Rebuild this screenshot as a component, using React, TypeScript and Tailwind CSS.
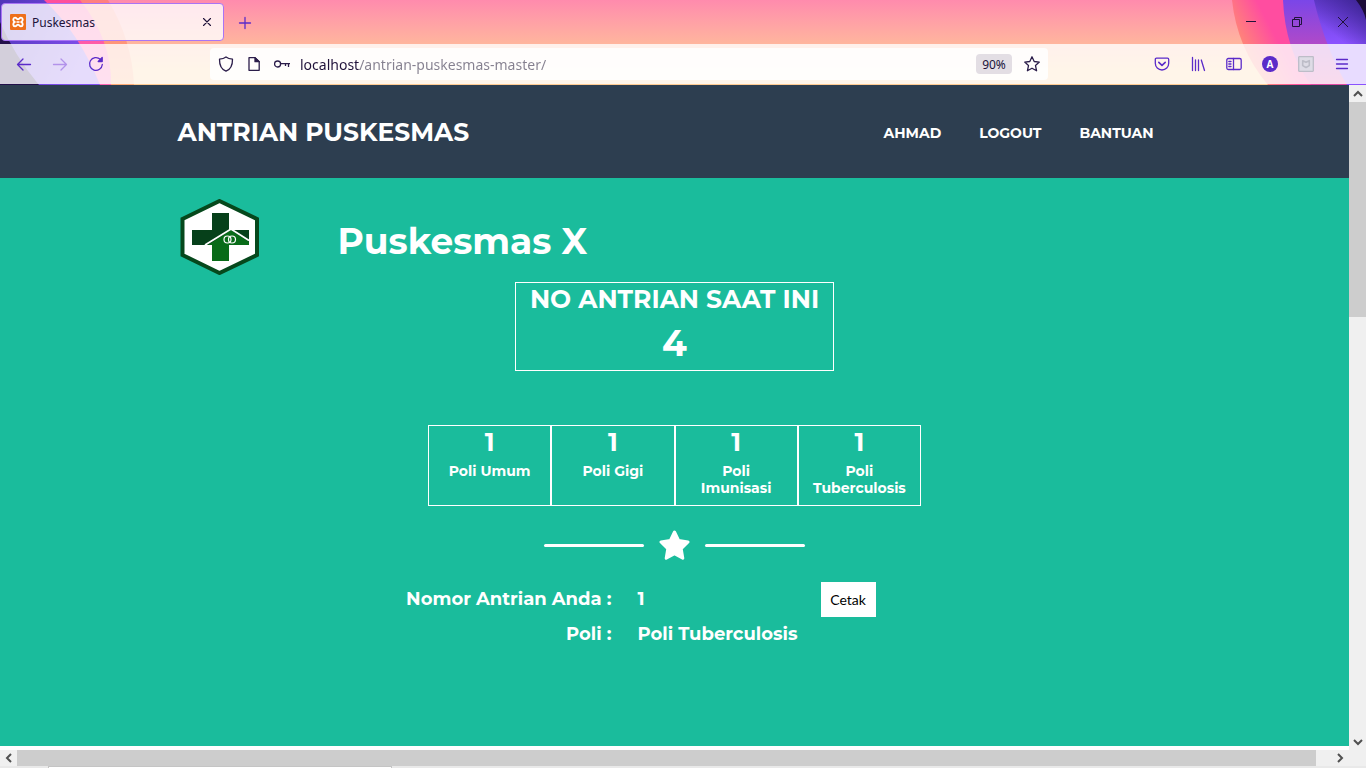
import React from "react";

const ink = "#5b2bc9";

function LeftArt() {
  return (
    <svg className="absolute top-0 left-0" width="160" height="85" viewBox="0 0 160 85" aria-hidden="true">
      <defs>
        <linearGradient id="lp" x1="0" y1="0" x2="1" y2="0.4">
          <stop offset="0" stopColor="#4f35b8" />
          <stop offset="1" stopColor="#8450f0" />
        </linearGradient>
        <linearGradient id="lk" x1="0" y1="0" x2="0" y2="1">
          <stop offset="0" stopColor="#ff4f9b" />
          <stop offset="1" stopColor="#ff66b4" />
        </linearGradient>
        <linearGradient id="lo" x1="0" y1="0" x2="0" y2="1">
          <stop offset="0" stopColor="#ff7f7f" />
          <stop offset="1" stopColor="#ffab74" />
        </linearGradient>
      </defs>
      <path d="M0 0H108Q132 40 134 85H0Z" fill="url(#lo)" />
      <path d="M0 0H80Q112 40 111 85H0Z" fill="url(#lk)" />
      <path d="M0 0H44Q80 34 100 85H0Z" fill="url(#lp)" />
      <path d="M0 0V22Q14 55 39 85H0Z" fill="#23104a" />
    </svg>
  );
}

function RightArt() {
  return (
    <svg className="absolute top-0 right-0" width="160" height="85" viewBox="0 0 160 85" aria-hidden="true">
      <defs>
        <linearGradient id="ro" gradientUnits="userSpaceOnUse" x1="34" y1="40" x2="76" y2="18">
          <stop offset="0" stopColor="#ff8578" />
          <stop offset="0.7" stopColor="#ff4da0" />
          <stop offset="1" stopColor="#ff4da0" />
        </linearGradient>
        <linearGradient id="rp" x1="0" y1="0" x2="0" y2="1">
          <stop offset="0" stopColor="#7a46e8" />
          <stop offset="0.6" stopColor="#b84ac4" />
          <stop offset="1" stopColor="#e14ba4" />
        </linearGradient>
        <linearGradient id="rv" x1="0" y1="0" x2="0" y2="1">
          <stop offset="0" stopColor="#6a3fd8" />
          <stop offset="0.5" stopColor="#8a52ff" />
          <stop offset="1" stopColor="#8a52ff" />
        </linearGradient>
        <linearGradient id="rd" x1="0" y1="1" x2="1" y2="0">
          <stop offset="0.3" stopColor="#3a2290" stopOpacity="0" />
          <stop offset="1" stopColor="#3a2290" />
        </linearGradient>
      </defs>
      <path d="M26 0Q31 48 62 85H160V0Z" fill="url(#ro)" />
      <path d="M77 0Q79 50 105 85H160V0Z" fill="url(#rp)" />
      <path d="M108 0Q120 50 141 85H160V0Z" fill="url(#rv)" />
      <path d="M108 0Q114 28 122 44H160V0Z" fill="url(#rd)" />
      <path d="M150 0Q158 10 160 20V0Z" fill="#1c0c38" />
    </svg>
  );
}

function XamppIcon() {
  return (
    <svg width="16" height="16" viewBox="0 0 16 16" aria-hidden="true">
      <rect width="16" height="16" rx="1" fill="#ee6f1a" />
      <path d="M5 3.600C3 3.600 2.600 6.600 4.600 8C2.600 9.400 3 12.400 5 12.400C6.600 12.400 6.800 10.600 8 10.600S9.400 12.400 11 12.400C13 12.400 13.400 9.400 11.400 8C13.400 6.600 13 3.600 11 3.600C9.400 3.600 9.200 5.400 8 5.400S6.600 3.600 5 3.600Z" fill="none" stroke="#fff" strokeWidth="1.900" />
      <path d="M6.500 8H9.500" stroke="#fff" strokeWidth="1.600" />
    </svg>
  );
}

function Icon({ children, color = ink }: { children: React.ReactNode; color?: string }) {
  return (
    <svg width="16" height="16" viewBox="0 0 16 16" fill="none" stroke={color} strokeWidth="1.3" strokeLinecap="round" strokeLinejoin="round" aria-hidden="true">
      {children}
    </svg>
  );
}

function IconButton({ label, children }: { label: string; children: React.ReactNode }) {
  return (
    <button type="button" aria-label={label} className="flex size-9 items-center justify-center">
      {children}
    </button>
  );
}

function TabStrip() {
  return (
    <div className="relative flex h-11 items-start">
      <div className="mt-[3px] ml-px flex h-[38px] w-[223px] items-center rounded border border-[#a974f5] bg-white/80 pr-2 pl-2 text-[#20123a]">
        <XamppIcon />
        <span className="ml-1.5 flex-1 pt-0.5 font-['Noto_Sans'] text-xs">Puskesmas</span>
        <button type="button" aria-label="Tutup tab" className="flex size-4 items-center justify-center">
          <Icon color="#20123a"><path d="M4.500 4.500L11.500 11.500M11.500 4.500L4.500 11.500" strokeWidth="1.100" /></Icon>
        </button>
      </div>
      <button type="button" aria-label="Tab baru" className="ml-[13px] flex h-[45px] w-4 items-center justify-center">
        <Icon><path d="M8 2.500V13.500M2.500 8H13.500" /></Icon>
      </button>
      <div className="ml-auto flex h-11">
        <button type="button" aria-label="Kecilkan" className="flex w-[46px] items-center justify-center">
          <svg width="10" height="10" viewBox="0 0 10 10" stroke="#20123a" aria-hidden="true"><path d="M0 4.500H10" /></svg>
        </button>
        <button type="button" aria-label="Pulihkan" className="flex w-[46px] items-center justify-center">
          <svg width="10" height="10" viewBox="0 0 10 10" fill="none" stroke="#20123a" aria-hidden="true"><path d="M.5 2.500H7.500V9.500H.5ZM2.500 2.500V.5H9.500V7.500H7.500" /></svg>
        </button>
        <button type="button" aria-label="Tutup" className="flex w-[46px] items-center justify-center">
          <svg width="10" height="10" viewBox="0 0 10 10" stroke="#20123a" aria-hidden="true"><path d="M0 0L10 10M10 0L0 10" /></svg>
        </button>
      </div>
    </div>
  );
}

function Toolbar() {
  return (
    <div className="relative flex h-10 items-center bg-white/80 pr-[6px] pl-[6px]">
      <IconButton label="Kembali"><Icon><path d="M14.500 8.500H1.500M7 3L1.500 8.500L7 14" /></Icon></IconButton>
      <IconButton label="Maju"><Icon color="#b292ea"><path d="M1.500 8.500H14.500M9 3L14.500 8.500L9 14" /></Icon></IconButton>
      <IconButton label="Muat ulang">
        <Icon><path d="M14.300 8.500A6.400 6.400 0 1 1 12.300 3.300" /><path d="M14.200 1.500V5.500H10.200Z" fill={ink} /></Icon>
      </IconButton>
      <div className="flex flex-1 justify-center">
        <div className="ml-24 flex h-8 w-full max-w-[838px] items-center rounded bg-white/85 pr-2 pl-2">
          <Icon color="#2b1d4a"><path d="M8 1C10 2.500 12.300 3 14.500 3.200C14.600 8.500 13.400 13 8 15.200C2.600 13 1.400 8.500 1.500 3.200C3.700 3 6 2.500 8 1Z" /></Icon>
          <span className="ml-3"><Icon color="#2b1d4a"><path d="M3 1.700H9L13.200 5.700V14.300H3Z" /><path d="M9 1.700V5.700H13.200Z" fill="#2b1d4a" /></Icon></span>
          <svg className="ml-3" width="16" height="16" viewBox="0 0 16 16" fill="none" stroke="#2b1d4a" strokeWidth="1.300" aria-hidden="true"><circle cx="3.600" cy="8" r="3" /><path d="M6.600 7.600H16M14.500 7.600V11M11.500 7.600V10" /></svg>
          <input
            type="text"
            aria-label="Alamat"
            defaultValue="localhost/antrian-puskesmas-master/"
            className="ml-2.5 h-7 min-w-0 flex-1 bg-linear-to-r from-[#20123a] from-[60px] to-[#85808f] to-[60px] bg-clip-text font-['Noto_Sans'] text-sm text-transparent outline-none"
          />
          <button type="button" className="h-5 w-9 rounded-sm bg-[#e3dee4] pt-0.5 font-['Noto_Sans'] text-xs text-[#20123a]">90%</button>
          <button type="button" aria-label="Markahi halaman" className="ml-3">
            <Icon color="#2b1d4a"><path d="M8 .8L10.200 5.500L15.300 6.100L11.500 9.600L12.600 14.800L8 12.200L3.400 14.800L4.500 9.600L.7 6.100L5.800 5.500Z" /></Icon>
          </button>
        </div>
      </div>
      <div className="ml-24 flex">
        <IconButton label="Simpan ke Pocket"><Icon><path d="M2.500 2.200H13.500Q14.700 2.200 14.700 3.400V7.300A6.700 6.700 0 0 1 1.300 7.300V3.400Q1.300 2.200 2.500 2.200Z" /><path d="M4.800 6.300L8 9.300L11.200 6.300" strokeWidth="1.600" /></Icon></IconButton>
        <IconButton label="Pustaka"><Icon><path d="M2.500 1.500V14.500M5.500 4V14.500M8.500 4V14.500M11.300 4L14.500 14.500" /></Icon></IconButton>
        <IconButton label="Bilah samping"><Icon><rect x=".8" y="2.500" width="14.400" height="11" rx="1.500" /><path d="M7.500 2.500V13.500M2.800 5.500H5M2.800 8H5M2.800 10.500H5" /></Icon></IconButton>
        <IconButton label="Akun"><span className="flex size-4 items-center justify-center rounded-full bg-[#5b2bc9] font-['Open_Sans'] text-[10px] font-bold text-white">A</span></IconButton>
        <IconButton label="Ekstensi"><Icon color="#bdbdc8"><rect x=".7" y=".7" width="14.600" height="14.600" rx=".5" fill="#dedce6" /><path d="M4.700 4.700L8 6.300L11.300 4.700V9.600L8 11.500L4.700 9.600Z" strokeWidth="1.600" /></Icon></IconButton>
        <IconButton label="Menu"><Icon><path d="M2.500 3.500H13.500M2.500 8H13.500M2.500 12.500H13.500" /></Icon></IconButton>
      </div>
    </div>
  );
}

function Logo() {
  return (
    <svg width="80" height="76" viewBox="0 0 80 76" role="img" aria-label="Logo Puskesmas">
      <path d="M39.500 2L77 20V56L39.500 74L2.500 56V20Z" fill="#fff" stroke="#06481c" strokeWidth="4" />
      <path d="M32 14H49V31H69V46H49V62H32V46H12V31H32Z" fill="#06401a" />
      <path d="M28 46L51 31L69 43V46H49V62H32V46Z" fill="#086b18" />
      <path d="M25 46L51 30L69 41.500" fill="none" stroke="#fff" strokeWidth="1.800" />
      <g fill="none" stroke="#fff" strokeWidth="1.200"><circle cx="47.500" cy="40.500" r="3.500" /><circle cx="52" cy="40.500" r="3.500" /></g>
    </svg>
  );
}

const Arrow = ({ d }: { d: string }) => (
  <svg width="10" height="10" viewBox="0 0 10 10" fill="none" stroke="#505050" strokeWidth="2" aria-hidden="true"><path d={d} /></svg>
);

const queues = [
  { number: 1, name: "Poli Umum" },
  { number: 1, name: "Poli Gigi" },
  { number: 1, name: "Poli Imunisasi" },
  { number: 1, name: "Poli Tuberculosis" },
];

function Page() {
  return (
    <div className="min-w-0 flex-1 overflow-hidden bg-[#1abc9c] font-['Montserrat','Inter',sans-serif] font-bold text-white">
      <nav className="bg-[#2d3e50]">
        <div className="mx-auto flex h-[93px] max-w-[994px] items-center justify-between pt-0.5">
          <a href="#beranda" className="text-[25px]">ANTRIAN PUSKESMAS</a>
          <div className="flex gap-[38px] pr-[18px] text-sm">
            <a href="#ahmad">AHMAD</a>
            <a href="#logout">LOGOUT</a>
            <a href="#bantuan">BANTUAN</a>
          </div>
        </div>
      </nav>
      <main className="mx-auto max-w-[994px]">
        <header className="flex h-[104px] items-start pt-[21px] pl-0.5">
          <Logo />
          <h1 className="mt-[18px] ml-[78px] text-4xl leading-[48px]">Puskesmas X</h1>
        </header>
        <section className="mx-auto h-[89px] w-[319px] border border-white text-center">
          <h2 className="text-[25px] leading-8">NO ANTRIAN SAAT INI</h2>
          <p className="mt-2 text-4xl leading-10">4</p>
        </section>
        <section className="mx-auto mt-[54px] grid w-[493px] grid-cols-4">
          {queues.map((queue) => (
            <div key={queue.name} className="h-[81px] border border-white px-3 text-center">
              <p className="text-[25px] leading-8">{queue.number}</p>
              <p className="mt-[5px] text-sm leading-[17px]">{queue.name}</p>
            </div>
          ))}
        </section>
        <div className="mt-6 flex items-center justify-center gap-[15px]">
          <span className="h-[3px] w-[100px] rounded-full bg-white" />
          <svg width="31" height="31" viewBox="0 0 31 31" aria-hidden="true"><path d="M15.500 2L19.700 10.600L29 12L22.200 18.700L23.800 28.200L15.500 23.700L7.200 28.200L8.800 18.700L2 12L11.300 10.600Z" fill="#fff" stroke="#fff" strokeWidth="3" strokeLinejoin="round" /></svg>
          <span className="h-[3px] w-[100px] rounded-full bg-white" />
        </div>
        <dl className="mt-[21px] grid grid-cols-[434px_1fr] gap-x-[26px] text-lg leading-[35px]">
          <dt className="text-right">Nomor Antrian Anda :</dt>
          <dd className="flex"><span className="w-[183px]">1</span><button type="button" className="h-[35px] w-[55px] bg-white font-['Lato'] text-sm font-normal text-black">Cetak</button></dd>
          <dt className="text-right">Poli :</dt>
          <dd>Poli Tuberculosis</dd>
        </dl>
      </main>
    </div>
  );
}

export default function App() {
  return (
    <div className="flex h-screen flex-col overflow-hidden bg-white">
      <div className="relative shrink-0 bg-linear-to-b from-[#ff8bad] to-[#ffcb92] to-80% pb-px">
        <LeftArt />
        <RightArt />
        <TabStrip />
        <Toolbar />
      </div>
      <div className="flex min-h-0 flex-1">
        <div className="flex min-w-0 flex-1 flex-col pb-1"><Page /></div>
        <div className="flex w-[17px] flex-col items-center bg-[#f0f0f0]">
          <span className="flex h-[17px] items-center"><Arrow d="M1 7L5 3L9 7" /></span>
          <span className="h-[215px] w-full bg-[#cdcdcd]" />
          <span className="mt-auto flex h-[17px] items-center"><Arrow d="M1 3L5 7L9 3" /></span>
        </div>
      </div>
      <div className="flex h-4 shrink-0 items-center bg-[#f0f0f0]">
        <span className="flex w-[17px] justify-center"><Arrow d="M7 1L3 5L7 9" /></span>
        <span className="h-full flex-1 bg-[#cdcdcd]" />
        <span className="mr-[17px] flex w-[33px] justify-end pr-1"><Arrow d="M3 1L7 5L3 9" /></span>
      </div>
      <div className="flex h-0.5 shrink-0 bg-[#e9e9e9]"><span className="ml-12 w-[344px] border border-b-0 border-[#c4c4c4] bg-white" /></div>
    </div>
  );
}
